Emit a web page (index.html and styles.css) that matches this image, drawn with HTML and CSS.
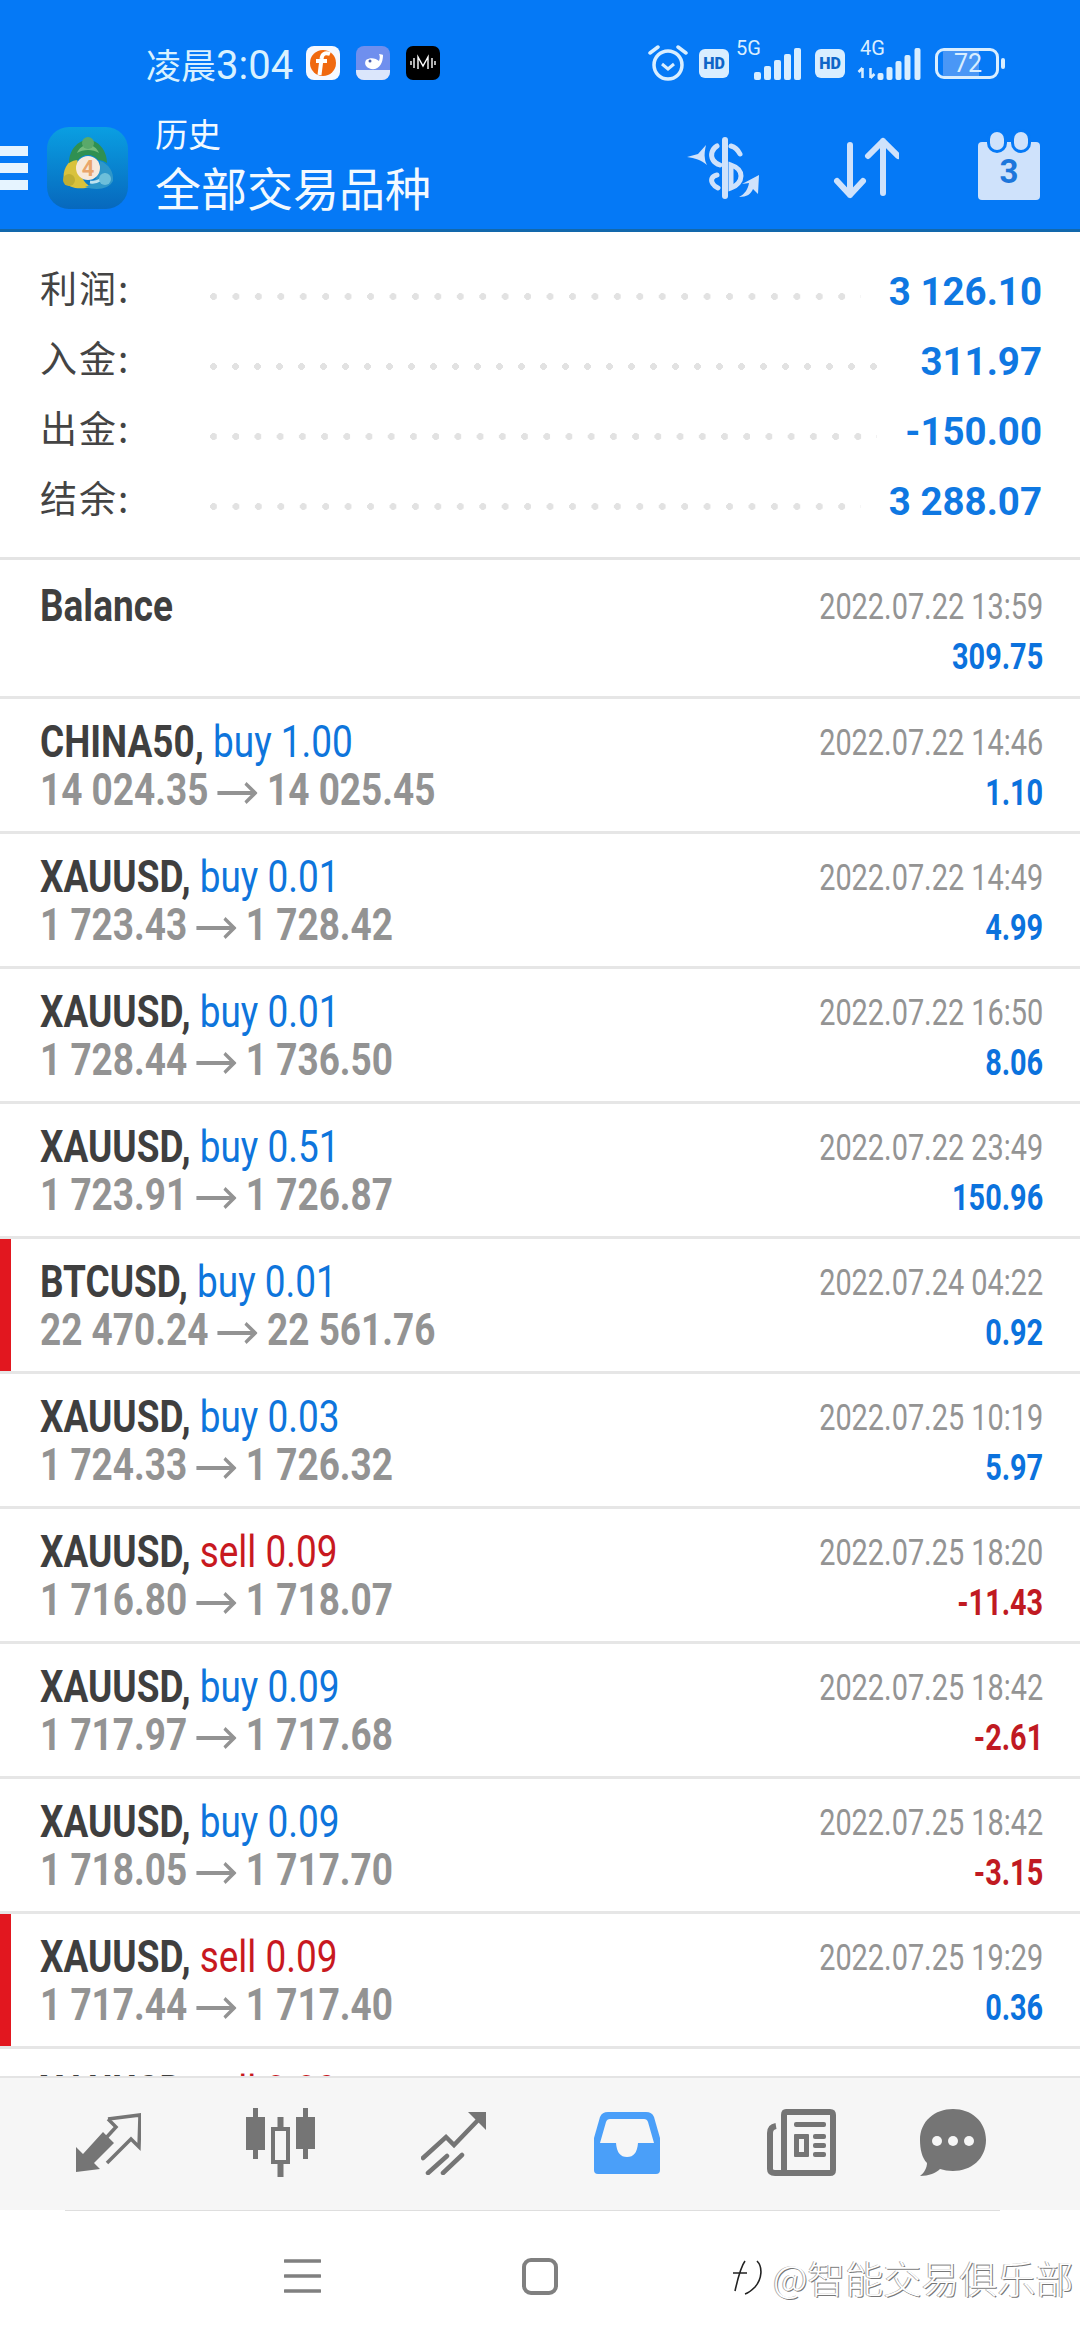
FILE: index.html
```html
<!DOCTYPE html>
<html lang="en">

<head>
    <meta charset="UTF-8">
    <meta name="viewport" content="width=device-width, initial-scale=1.0">
    <title>历史</title>
    <link rel="stylesheet" href="styles.css">
</head>

<body>
    <div class="phone">
        <header class="top">
            <div class="status-bar">
                <span class="clock">凌晨<span class="clock-digits">3:04</span></span>
                <svg class="app-icon" viewBox="0 0 34 34">
                    <rect width="34" height="34" rx="8" fill="#f6f9ff" />
                    <circle cx="17" cy="17" r="13" fill="#f0690f" />
                    <path d="M24 8c-5-2-8 0-8.500 5l-2 16M10 15h11" fill="none" stroke="#fff" stroke-width="4" />
                </svg>
                <svg class="app-icon app-whale" viewBox="0 0 34 34">
                    <rect width="34" height="34" rx="8" fill="#6f8fee" />
                    <path d="M0 24h34v2a8 8 0 0 1-8 8H8a8 8 0 0 1-8-8z" fill="#dbe6fb" />
                    <path d="M10 14c4-3 10-2 13 1 1-3 1-5 0-7 2 0 4 1 4 1 0 4-1 12-8 14-7 1-12-4-9-9z" fill="#fff" />
                    <circle cx="14" cy="15" r="1.500" fill="#4a5fb0" />
                </svg>
                <svg class="app-icon app-music" viewBox="0 0 34 34">
                    <rect width="34" height="34" rx="7" fill="#000" />
                    <path d="M5 15v4M8 12v10M12 23V11l5 9 5-9v12M26 12v10M29 15v4" fill="none" stroke="#fff" stroke-width="1.400" />
                </svg>

                <div class="status-right">
                    <svg class="alarm" viewBox="0 0 40 38">
                        <circle cx="20" cy="21" r="14" fill="none" stroke="#d9eeff" stroke-width="3.500" />
                        <path d="M14 20l6 5 6-5" fill="none" stroke="#d9eeff" stroke-width="3" />
                        <path d="M2 9l8-6M38 9l-8-6" stroke="#d9eeff" stroke-width="3.500" stroke-linecap="round" />
                    </svg>
                    <span class="hd">HD</span>
                    <div class="net net-5g">
                        <span class="net-label">5G</span>
                        <svg class="bars" viewBox="0 0 48 32">
                            <rect x="0" y="24" width="7" height="8" rx="2" />
                            <rect x="10" y="18" width="7" height="14" rx="2" />
                            <rect x="20" y="12" width="7" height="20" rx="2" />
                            <rect x="30" y="6" width="7" height="26" rx="2" />
                            <rect x="40" y="0" width="7" height="32" rx="2" />
                        </svg>
                    </div>
                    <span class="hd">HD</span>
                    <div class="net net-4g">
                        <span class="net-label">4G</span>
                        <svg class="bars" viewBox="0 0 65 32">
                            <path d="M5 30V20M1 24l4-4M13 20v10M13 30l4-4" fill="none" stroke="#d9eeff" stroke-width="2.500" />
                            <rect x="20" y="25" width="6" height="7" rx="2" />
                            <rect x="29" y="19" width="6" height="13" rx="2" />
                            <rect x="38" y="13" width="6" height="19" rx="2" />
                            <rect x="47" y="7" width="6" height="25" rx="2" />
                            <rect x="57" y="0" width="6" height="32" rx="2" />
                        </svg>
                    </div>
                    <div class="battery">
                        <div class="battery-level"></div>
                        <span class="battery-text">72</span>
                    </div>
                    <div class="battery-nub"></div>
                </div>
            </div>

            <div class="app-bar">
                <div class="burger"><span></span><span></span><span></span></div>
                <svg class="logo" viewBox="0 0 81 82">
                    <defs>
                        <linearGradient id="logoBg" x1="0" y1="0" x2="0" y2="1">
                            <stop offset="0" stop-color="#0a9fe2" />
                            <stop offset="1" stop-color="#0768bd" />
                        </linearGradient>
                    </defs>
                    <rect width="81" height="82" rx="22" fill="url(#logoBg)" />
                    <path d="M30 30C20 34 15 44 17 54c4 7 15 9 27 6-7-4-13-12-14-30z" fill="#d9c23c" />
                    <circle cx="22" cy="53" r="6" fill="#bfae32" />
                    <path d="M53 34c9 3 14 11 13 20-4 8-16 10-28 6 9-3 15-11 15-26z" fill="#2f97c9" />
                    <path d="M43 55c6 1 12-2 16-8" fill="none" stroke="#bfe3f0" stroke-width="3" />
                    <circle cx="58" cy="52" r="6" fill="#6dbfda" />
                    <path d="M41 13c-10 0-19 10-19 23 3-2 6-3 9-3 2-3 6-5 10-5s8 2 10 5c3 0 6 1 9 3 0-13-9-23-19-23z" fill="#2f9052" />
                    <path d="M30 26c2-5 6-8 11-8s9 3 11 8c-3-2-7-3-11-3s-8 1-11 3z" fill="#74bb7c" />
                    <circle cx="41" cy="16" r="6" fill="#5aa96a" />
                    <circle cx="41" cy="41" r="12" fill="#f7e9dc" />
                    <text class="logo-num" x="41" y="49" text-anchor="middle">4</text>
                </svg>
                <div class="titles">
                    <div class="title-small">历史</div>
                    <div class="title-big">全部交易品种</div>
                </div>
                <div class="actions">
                    <svg class="act-dollar" viewBox="0 0 73 62">
                        <path d="M38 3v56" stroke="#cfe2fb" stroke-width="6" stroke-linecap="round" />
                        <path d="M44 9c4 1 7 4 9 8M30 9c-5 3-7 9-4 14 2 3 4 4 7 5M44 28c6 2 10 6 10 11 0 5-4 10-10 12V28zM30 38c-5 1-7 5-4 9 1 2 3 3 5 4" fill="none" stroke="#cfe2fb" stroke-width="5" stroke-linecap="round" />
                        <path d="M0 20l11-3 8-9c-1 5-2 9-1 14 0 2 1 4 2 6-6-5-12-7-20-8z" fill="#cfe2fb" />
                        <path d="M52 60c6-3 9-8 10-14l-7 1 17-9-1 19-5-5c-2 5-6 8-14 8z" fill="#cfe2fb" />
                    </svg>
                    <svg class="act-sort" viewBox="0 0 66 62">
                        <path d="M17 8v50M4 44l13 14 13-14M50 56V4M35 19L50 4l15 15" fill="none" stroke="#cfe2fb" stroke-width="6" stroke-linecap="round" stroke-linejoin="round" />
                    </svg>
                    <div class="calendar">
                        <span class="cal-ring cal-ring-a"></span>
                        <span class="cal-ring cal-ring-b"></span>
                        3
                    </div>
                </div>
            </div>
        </header>

        <section class="summary">
            <div class="sum-row"><span class="sum-label">利润:</span><span class="sum-dots"></span><span class="sum-value">3 126.10</span></div>
            <div class="sum-row"><span class="sum-label">入金:</span><span class="sum-dots"></span><span class="sum-value">311.97</span></div>
            <div class="sum-row"><span class="sum-label">出金:</span><span class="sum-dots"></span><span class="sum-value">-150.00</span></div>
            <div class="sum-row"><span class="sum-label">结余:</span><span class="sum-dots"></span><span class="sum-value">3 288.07</span></div>
        </section>

        <main class="deals">
            <div class="deal deal-balance">
                <div class="deal-main"><div class="deal-title"><b>Balance</b></div></div>
                <div class="deal-side"><div class="deal-date">2022.07.22 13:59</div><div class="deal-profit">309.75</div></div>
            </div>
            <div class="deal">
                <div class="deal-main">
                    <div class="deal-title"><b>CHINA50,</b> <span class="buy">buy 1.00</span></div>
                    <div class="deal-price">14 024.35 <svg class="arrow" viewBox="0 0 50 24"><path d="M0 12h47M35 2l12 10-12 10" /></svg> 14 025.45</div>
                </div>
                <div class="deal-side"><div class="deal-date">2022.07.22 14:46</div><div class="deal-profit">1.10</div></div>
            </div>
            <div class="deal">
                <div class="deal-main">
                    <div class="deal-title"><b>XAUUSD,</b> <span class="buy">buy 0.01</span></div>
                    <div class="deal-price">1 723.43 <svg class="arrow" viewBox="0 0 50 24"><path d="M0 12h47M35 2l12 10-12 10" /></svg> 1 728.42</div>
                </div>
                <div class="deal-side"><div class="deal-date">2022.07.22 14:49</div><div class="deal-profit">4.99</div></div>
            </div>
            <div class="deal">
                <div class="deal-main">
                    <div class="deal-title"><b>XAUUSD,</b> <span class="buy">buy 0.01</span></div>
                    <div class="deal-price">1 728.44 <svg class="arrow" viewBox="0 0 50 24"><path d="M0 12h47M35 2l12 10-12 10" /></svg> 1 736.50</div>
                </div>
                <div class="deal-side"><div class="deal-date">2022.07.22 16:50</div><div class="deal-profit">8.06</div></div>
            </div>
            <div class="deal">
                <div class="deal-main">
                    <div class="deal-title"><b>XAUUSD,</b> <span class="buy">buy 0.51</span></div>
                    <div class="deal-price">1 723.91 <svg class="arrow" viewBox="0 0 50 24"><path d="M0 12h47M35 2l12 10-12 10" /></svg> 1 726.87</div>
                </div>
                <div class="deal-side"><div class="deal-date">2022.07.22 23:49</div><div class="deal-profit">150.96</div></div>
            </div>
            <div class="deal deal-marked">
                <div class="deal-main">
                    <div class="deal-title"><b>BTCUSD,</b> <span class="buy">buy 0.01</span></div>
                    <div class="deal-price">22 470.24 <svg class="arrow" viewBox="0 0 50 24"><path d="M0 12h47M35 2l12 10-12 10" /></svg> 22 561.76</div>
                </div>
                <div class="deal-side"><div class="deal-date">2022.07.24 04:22</div><div class="deal-profit">0.92</div></div>
            </div>
            <div class="deal">
                <div class="deal-main">
                    <div class="deal-title"><b>XAUUSD,</b> <span class="buy">buy 0.03</span></div>
                    <div class="deal-price">1 724.33 <svg class="arrow" viewBox="0 0 50 24"><path d="M0 12h47M35 2l12 10-12 10" /></svg> 1 726.32</div>
                </div>
                <div class="deal-side"><div class="deal-date">2022.07.25 10:19</div><div class="deal-profit">5.97</div></div>
            </div>
            <div class="deal">
                <div class="deal-main">
                    <div class="deal-title"><b>XAUUSD,</b> <span class="sell">sell 0.09</span></div>
                    <div class="deal-price">1 716.80 <svg class="arrow" viewBox="0 0 50 24"><path d="M0 12h47M35 2l12 10-12 10" /></svg> 1 718.07</div>
                </div>
                <div class="deal-side"><div class="deal-date">2022.07.25 18:20</div><div class="deal-profit loss">-11.43</div></div>
            </div>
            <div class="deal">
                <div class="deal-main">
                    <div class="deal-title"><b>XAUUSD,</b> <span class="buy">buy 0.09</span></div>
                    <div class="deal-price">1 717.97 <svg class="arrow" viewBox="0 0 50 24"><path d="M0 12h47M35 2l12 10-12 10" /></svg> 1 717.68</div>
                </div>
                <div class="deal-side"><div class="deal-date">2022.07.25 18:42</div><div class="deal-profit loss">-2.61</div></div>
            </div>
            <div class="deal">
                <div class="deal-main">
                    <div class="deal-title"><b>XAUUSD,</b> <span class="buy">buy 0.09</span></div>
                    <div class="deal-price">1 718.05 <svg class="arrow" viewBox="0 0 50 24"><path d="M0 12h47M35 2l12 10-12 10" /></svg> 1 717.70</div>
                </div>
                <div class="deal-side"><div class="deal-date">2022.07.25 18:42</div><div class="deal-profit loss">-3.15</div></div>
            </div>
            <div class="deal deal-marked">
                <div class="deal-main">
                    <div class="deal-title"><b>XAUUSD,</b> <span class="sell">sell 0.09</span></div>
                    <div class="deal-price">1 717.44 <svg class="arrow" viewBox="0 0 50 24"><path d="M0 12h47M35 2l12 10-12 10" /></svg> 1 717.40</div>
                </div>
                <div class="deal-side"><div class="deal-date">2022.07.25 19:29</div><div class="deal-profit">0.36</div></div>
            </div>
            <div class="deal">
                <div class="deal-main">
                    <div class="deal-title"><b>XAUUSD,</b> <span class="sell">sell 0.09</span></div>
                </div>
            </div>
        </main>

        <nav class="tabs">
            <div class="tab">
                <svg width="66" height="60" viewBox="0 0 66 60">
                    <path d="M1 34l7 7 20-22 11 11-20 20 6 6-24 3z" fill="#757575" />
                    <path d="M33 6l32-4-1 32-8-8-24 24M33 6l8 8-11 12" fill="none" stroke="#757575" stroke-width="3.500" />
                </svg>
            </div>
            <div class="tab">
                <svg width="69" height="69" viewBox="0 0 69 69">
                    <path d="M7 0h5v9h7v33h-7v9H7v-9H0V9h7zM57 0h5v9h7v32h-7v10h-5V41h-7V9h7z" fill="#757575" />
                    <rect x="27" y="21" width="15" height="33" fill="none" stroke="#757575" stroke-width="4" />
                    <path d="M34.500 9v10M34.500 56v13" stroke="#757575" stroke-width="6" />
                </svg>
            </div>
            <div class="tab">
                <svg width="66" height="64" viewBox="0 0 66 64">
                    <path d="M2 47l23-21 8 8 27-28" fill="none" stroke="#757575" stroke-width="4.500" stroke-linecap="round" />
                    <path d="M47 1h18v18z" fill="#757575" />
                    <path d="M7 62l19-17M22 62l19-18" stroke="#757575" stroke-width="4.500" stroke-linecap="round" />
                </svg>
            </div>
            <div class="tab">
                <svg width="66" height="62" viewBox="0 0 66 62">
                    <path d="M14 0h38q6 0 8 5l6 21v32q0 4-4 4H4q-4 0-4-4V26L6 5q2-5 8-5z" fill="#4a9ff9" />
                    <path d="M16 7h34q3 0 4 3l6 21H44q-1 14-11 14T22 31H6l6-21q1-3 4-3z" fill="#f6f6f6" />
                </svg>
            </div>
            <div class="tab">
                <svg width="69" height="67" viewBox="0 0 69 67">
                    <path d="M19 3h44q3 0 3 3v55q0 3-3 3H17V6q0-3 2-3z" fill="none" stroke="#757575" stroke-width="6" />
                    <path d="M9 17Q3 18 3 24v36q0 4 5 4h9" fill="none" stroke="#757575" stroke-width="6" />
                    <rect x="27" y="13" width="32" height="5" rx="2" fill="#757575" />
                    <rect x="27" y="25" width="15" height="23" rx="1" fill="#757575" />
                    <rect x="32" y="30" width="5" height="13" fill="#f6f6f6" />
                    <rect x="46" y="25" width="13" height="5" rx="2" fill="#757575" />
                    <rect x="46" y="34" width="13" height="5" rx="2" fill="#757575" />
                    <rect x="46" y="43" width="13" height="5" rx="2" fill="#757575" />
                </svg>
            </div>
            <div class="tab">
                <svg width="66" height="67" viewBox="0 0 66 67">
                    <path d="M33 0c18 0 33 12 33 31S51 62 33 62c-5 0-9-1-13-2-4 4-11 7-20 7 4-3 7-8 7-13C2 49 0 40 0 31 0 12 15 0 33 0z" fill="#757575" />
                    <circle cx="17" cy="32" r="5" fill="#f6f6f6" />
                    <circle cx="33" cy="32" r="5" fill="#f6f6f6" />
                    <circle cx="49" cy="32" r="5" fill="#f6f6f6" />
                </svg>
            </div>
        </nav>

        <footer class="sys-nav">
            <svg class="nav-menu" viewBox="0 0 37 34">
                <path d="M1 2h35M1 17h35M1 32h35" stroke="#808080" stroke-width="3.500" stroke-linecap="round" />
            </svg>
            <div class="nav-home"></div>
            <div class="watermark">
                <svg class="wm-logo" viewBox="0 0 34 42">
                    <path d="M12 6C9 10 6 18 2 36M0 18h14M24 6c6 6 5 18-2 26-3 3-7 6-10 7" fill="none" stroke="#222" stroke-width="1.600" />
                </svg>
                <span class="wm-text">@智能交易俱乐部</span>
            </div>
        </footer>
    </div>
</body>

</html>
```

FILE: styles.css
```css
* {
    box-sizing: border-box;
}

body {
    margin: 0;
    padding: 0;
    background-color: #fff;
    font-family: Roboto, "Noto Sans CJK SC", sans-serif;
}

.phone {
    width: 1080px;
    height: 2340px;
    display: flex;
    flex-direction: column;
    overflow: hidden;
}

/* blue header */
.top {
    height: 232px;
    background-color: #0579f6;
    border-bottom: 3px solid #1268ac;
}

.status-bar {
    height: 106px;
    padding: 20px 0 0 146px;
    display: flex;
    align-items: center;
}

.clock {
    width: 160px;
    font-size: 35px;
    color: #d9f1ff;
    white-space: nowrap;
}

.clock-digits {
    font-size: 40px;
}

.app-icon {
    width: 34px;
    height: 34px;
}

.app-whale {
    margin-left: 16px;
}

.app-music {
    margin-left: 16px;
}

.status-right {
    margin-left: 208px;
    display: flex;
    align-items: center;
}

.alarm {
    width: 40px;
    height: 38px;
}

.hd {
    width: 30px;
    height: 29px;
    margin-left: 11px;
    border-radius: 6px;
    background-color: #d9eeff;
    color: #0f66c8;
    font-size: 16px;
    font-weight: 900;
    line-height: 29px;
    text-align: center;
}

.net {
    position: relative;
    height: 34px;
    margin-left: 7px;
}

.net-5g {
    width: 63px;
    margin-right: 5px;
}

.net-4g {
    width: 75px;
    margin-left: 12px;
}

.net-label {
    position: absolute;
    left: 0;
    top: -10px;
    font-size: 20px;
    color: #d9eeff;
}

.net-4g .net-label {
    left: 3px;
}

.bars {
    position: absolute;
    left: 18px;
    bottom: 0;
    width: 48px;
    height: 32px;
    fill: #d9eeff;
}

.net-4g .bars {
    left: 0;
    width: 66px;
}

.battery {
    position: relative;
    width: 64px;
    height: 31px;
    margin-left: 3px;
    border: 3px solid #d9eeff;
    border-radius: 9px;
    overflow: hidden;
}

.battery-level {
    width: 62%;
    height: 100%;
    margin-left: 5px;
    background-color: #4a97f6;
}

.battery-text {
    position: absolute;
    left: 16px;
    top: -1px;
    font-size: 25px;
    line-height: 27px;
    color: #d9eeff;
}

.battery-nub {
    width: 4px;
    height: 11px;
    margin-left: 2px;
    border-radius: 2px;
    background-color: #d9eeff;
}

.app-bar {
    height: 123px;
    display: flex;
    align-items: center;
}

.burger {
    width: 28px;
    display: flex;
    flex-direction: column;
    gap: 7px;
}

.burger span {
    height: 10px;
    background-color: #e6f4ff;
}

.logo {
    width: 81px;
    height: 82px;
    margin-left: 19px;
}

.logo-num {
    font-size: 22px;
    font-weight: 700;
    fill: #e9a56b;
}

.titles {
    margin-left: 27px;
    color: #f2f9ff;
}

.title-small {
    font-size: 33px;
    line-height: 44px;
}

.title-big {
    font-size: 46px;
    line-height: 64px;
}

.actions {
    margin-left: auto;
    display: flex;
    align-items: center;
    padding-right: 40px;
}

.act-dollar {
    width: 73px;
    height: 62px;
}

.act-sort {
    width: 66px;
    height: 62px;
    margin-left: 73px;
}

.calendar {
    position: relative;
    width: 62px;
    height: 58px;
    margin: 6px 0 0 79px;
    border-radius: 4px;
    background-color: #cfe2fb;
    color: #1d76db;
    font-size: 33px;
    font-weight: 700;
    line-height: 60px;
    text-align: center;
}

.cal-ring {
    position: absolute;
    top: -10px;
    width: 14px;
    height: 18px;
    border-radius: 7px;
    background-color: #cfe2fb;
    box-shadow: 0 0 0 3px #0579f6;
}

.cal-ring-a {
    left: 12px;
}

.cal-ring-b {
    right: 12px;
}

/* totals */
.summary {
    height: 328px;
    padding-top: 24px;
    border-bottom: 3px solid #e4e4e4;
}

.sum-row {
    height: 70px;
    padding: 0 38px 0 40px;
    display: flex;
    align-items: center;
}

.sum-label {
    width: 170px;
    margin-bottom: 8px;
    font-size: 37px;
    letter-spacing: 2px;
    color: #444;
    font-family: "Noto Sans CJK SC", sans-serif;
}

.sum-dots {
    flex: 1;
    height: 7px;
    margin: 10px 28px 0 0;
    background-image: radial-gradient(circle at 3.500px 50%, #e2e2e2 3.400px, transparent 3.600px);
    background-size: 22.100px 7px;
    background-repeat: round no-repeat;
}

.sum-value {
    font-size: 38.500px;
    font-weight: 700;
    color: #0f78e2;
    white-space: nowrap;
}

/* deal list */
.deals {
    flex: 1;
    overflow: hidden;
}

.deal {
    height: 135px;
    padding: 19px 37px 0 40px;
    display: flex;
    justify-content: space-between;
    border-bottom: 3px solid #e6e6e6;
}

.deal-balance {
    height: 139px;
    padding-top: 22px;
}

.deal-marked {
    box-shadow: inset 11px 0 0 #e2171f;
}

.deal-main {
    transform: scaleX(0.84);
    transform-origin: left top;
    white-space: nowrap;
}

.deal-side {
    transform: scaleX(0.78);
    transform-origin: right top;
    text-align: right;
    white-space: nowrap;
}

.deal-title {
    font-size: 44px;
    line-height: 48px;
}

.deal-title b {
    color: #3f3f3f;
}

.buy {
    color: #0e75dc;
}

.sell {
    color: #c8191f;
}

.deal-price {
    font-size: 44px;
    line-height: 48px;
    font-weight: 700;
    color: #939393;
}

.arrow {
    width: 48px;
    height: 24px;
    fill: none;
    stroke: #939393;
    stroke-width: 4;
}

.deal-date {
    font-size: 37px;
    line-height: 48px;
    margin-top: 1px;
    color: #949494;
}

.deal-profit {
    font-size: 37px;
    line-height: 48px;
    margin-top: 2px;
    font-weight: 700;
    color: #0b72dd;
}

.deal-profit.loss {
    color: #c01a22;
}

/* bottom tabs */
.tabs {
    height: 134px;
    flex-shrink: 0;
    display: grid;
    grid-template-columns: 216px 129px 217px 130px 218px 86px;
    align-items: center;
    padding-bottom: 3px;
    background-color: #f6f6f6;
    border-top: 2px solid #e4e4e4;
}

.tab {
    display: flex;
    justify-content: center;
}

.sys-nav {
    height: 130px;
    flex-shrink: 0;
    position: relative;
    display: flex;
    align-items: center;
    padding-top: 2px;
    background-color: #fff;
}

.sys-nav::before {
    content: "";
    position: absolute;
    left: 65px;
    right: 80px;
    top: 0;
    height: 1px;
    background-color: #dedede;
}

.nav-menu {
    width: 37px;
    height: 34px;
    margin-left: 284px;
}

.nav-home {
    width: 36px;
    height: 37px;
    margin-left: 201px;
    border: 4px solid #808080;
    border-radius: 9px;
}

.watermark {
    margin-left: 175px;
    display: flex;
    align-items: center;
}

.wm-logo {
    width: 34px;
    height: 42px;
}

.wm-text {
    margin-left: 6px;
    font-size: 38px;
    font-family: "Noto Sans CJK SC", sans-serif;
    font-weight: 300;
    color: #fff;
    text-shadow: 1px 1px 0 #777, -1px 0 0 #aaa;
    white-space: nowrap;
}
```
